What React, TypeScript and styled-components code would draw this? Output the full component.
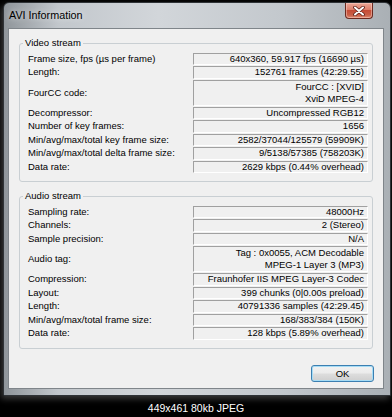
import { createGlobalStyle, styled } from 'styled-components'

type InfoRow = { label: string; value: string[] }

const videoRows: InfoRow[] = [
  { label: 'Frame size, fps (µs per frame)', value: ['640x360, 59.917 fps (16690 µs)'] },
  { label: 'Length:', value: ['152761 frames (42:29.55)'] },
  { label: 'FourCC code:', value: ['FourCC : [XVID]', 'XviD MPEG-4'] },
  { label: 'Decompressor:', value: ['Uncompressed RGB12'] },
  { label: 'Number of key frames:', value: ['1656'] },
  { label: 'Min/avg/max/total key frame size:', value: ['2582/37044/125579 (59909K)'] },
  { label: 'Min/avg/max/total delta frame size:', value: ['9/5138/57385 (758203K)'] },
  { label: 'Data rate:', value: ['2629 kbps (0.44% overhead)'] },
]

const audioRows: InfoRow[] = [
  { label: 'Sampling rate:', value: ['48000Hz'] },
  { label: 'Channels:', value: ['2 (Stereo)'] },
  { label: 'Sample precision:', value: ['N/A'] },
  { label: 'Audio tag:', value: ['Tag : 0x0055, ACM Decodable', 'MPEG-1 Layer 3 (MP3)'] },
  { label: 'Compression:', value: ['Fraunhofer IIS MPEG Layer-3 Codec'] },
  { label: 'Layout:', value: ['399 chunks (0|0.00s preload)'] },
  { label: 'Length:', value: ['40791336 samples (42:29.45)'] },
  { label: 'Min/avg/max/total frame size:', value: ['168/383/384 (150K)'] },
  { label: 'Data rate:', value: ['128 kbps (5.89% overhead)'] },
]

const Group = ({ title, rows }: { title: string; rows: InfoRow[] }) => (
  <StyledGroup>
    <StyledLegend>{title}</StyledLegend>
    <StyledRows>
      {rows.map((row, i) => (
        <StyledRow key={i}>
          <StyledLabel>{row.label}</StyledLabel>
          <StyledValue $lines={row.value.length}>
            {row.value.map((line, j) => (
              <span key={j}>{line}</span>
            ))}
          </StyledValue>
        </StyledRow>
      ))}
    </StyledRows>
  </StyledGroup>
)

export default function App() {
  return (
    <>
      <GlobalStyle />
      <StyledWindow>
        <StyledTitleBar>
          <StyledTitle>AVI Information</StyledTitle>
          <StyledClose>
            <svg width="12" height="10" viewBox="0 0 12 10">
              <path
                d="M2 1.5 L10 8.5 M10 1.5 L2 8.5"
                stroke="#5a1f17"
                strokeWidth="3.6"
                strokeLinecap="round"
              />
              <path
                d="M2 1.5 L10 8.5 M10 1.5 L2 8.5"
                stroke="#fff"
                strokeWidth="2"
                strokeLinecap="round"
              />
            </svg>
          </StyledClose>
        </StyledTitleBar>
        <StyledClient>
          <Group title={'Video stream'} rows={videoRows} />
          <Group title={'Audio stream'} rows={audioRows} />
          <StyledOk type={'button'}>OK</StyledOk>
        </StyledClient>
      </StyledWindow>
      <StyledCaption>449x461 80kb JPEG</StyledCaption>
    </>
  )
}

const GlobalStyle = createGlobalStyle`
  html, body {
    margin: 0;
    background: #000;
  }

  body {
    width: 392px;
    height: 417px;
    overflow: hidden;
    font-family: 'Liberation Sans', Arial, sans-serif;
  }
`

const StyledWindow = styled.div`
  box-sizing: border-box;
  width: 388px;
  margin: 2px 0 0 3px;
  padding: 0 6px 6px 4px;
  border: 1px solid #2f3337;
  border-radius: 6px 6px 0 0;
  background: linear-gradient(
    to right,
    #8f959a 0%,
    #c2c7cc 14%,
    #d2d6da 40%,
    #c3c8cd 72%,
    #aab0b5 100%
  );
  box-shadow: -2px 3px 6px rgba(160, 160, 160, 0.35);
`

const StyledTitleBar = styled.div`
  display: flex;
  justify-content: space-between;
  align-items: flex-start;
  height: 25px;
`

const StyledTitle = styled.span`
  padding: 6px 0 0 1px;
  font-size: 10.8px;
  line-height: 12px;
  color: #000;
  text-shadow: 0 0 6px rgba(255, 255, 255, 0.8);
`

const StyledClose = styled.div`
  display: flex;
  justify-content: center;
  align-items: center;
  box-sizing: border-box;
  width: 28px;
  height: 16px;
  margin: 0 11px 0 0;
  border: 1px solid #6b2a20;
  border-top: none;
  border-radius: 0 0 4px 4px;
  background: linear-gradient(#eba797 0%, #dc7f6b 45%, #c64c36 50%, #c95f47 80%, #df8b72 100%);
  box-shadow: inset 0 0 0 1px rgba(255, 220, 210, 0.45);
`

const StyledClient = styled.div`
  display: flex;
  flex-direction: column;
  box-sizing: border-box;
  height: 361px;
  padding: 8px 0 6px 0;
  border: 1px solid #7f858a;
  background: #f0f0f0;
`

const StyledGroup = styled.fieldset`
  margin: 0 10px 8px 10px;
  padding: 0;
  min-inline-size: 0;
  border: 1px solid #c9cfd3;
  border-radius: 3px;
`

const StyledLegend = styled.legend`
  margin: 0 0 0 3px;
  padding: 0 2px;
  font-size: 9.5px;
  line-height: 12px;
  color: #000;
`

const StyledRows = styled.div`
  display: flex;
  flex-direction: column;
  gap: 1px;
  padding: 3.5px 6px 8px 8px;
`

const StyledRow = styled.div`
  display: grid;
  grid-template-columns: 165px 175px;
  align-items: center;
  font-size: 9.5px;
  color: #000;
`

const StyledLabel = styled.span`
  white-space: nowrap;
  line-height: 12px;
`

const StyledValue = styled.div<{ $lines: number }>`
  display: flex;
  flex-direction: column;
  justify-content: center;
  align-items: flex-end;
  box-sizing: border-box;
  height: ${({ $lines }) => ($lines > 1 ? 26 : 12.5)}px;
  padding: 0 3px 0 0;
  border-style: solid;
  border-width: 1px;
  border-color: #a0a0a0 #ffffff #ffffff #a0a0a0;
  line-height: 12px;
  white-space: nowrap;
`

const StyledOk = styled.button`
  align-self: flex-end;
  width: 63px;
  height: 17px;
  margin: 8.5px 9px 0 0;
  padding: 0;
  border: 1px solid #3c7fb1;
  border-radius: 3px;
  background: linear-gradient(#f2f2f2 0%, #ebebeb 48%, #dddddd 52%, #cfcfcf 100%);
  box-shadow: inset 0 0 0 1px #a6dcf5;
  font-family: 'Liberation Sans', Arial, sans-serif;
  font-size: 9.5px;
  color: #000;
`

const StyledCaption = styled.div`
  height: 21px;
  padding: 3px 0 0 0;
  box-sizing: border-box;
  text-align: center;
  font-size: 10.5px;
  line-height: 18px;
  color: #fff;
`
